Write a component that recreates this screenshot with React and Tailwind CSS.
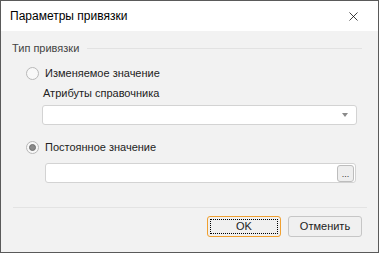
import { X } from 'lucide-react'

function Radio({ checked }) {
  return (
    <span className="w-[13px] h-[13px] rounded-full border border-[#b8b8b8] bg-[#f8f8f8] flex items-center justify-center shrink-0">
      {checked && <span className="w-[7px] h-[7px] rounded-full bg-[#8a8a8a] border border-[#707070]" />}
    </span>
  )
}

export default function App() {
  return (
    <div className="w-[379px] h-[253px] border border-[#5a5a5a] bg-[#f2f2f2] flex flex-col font-['Liberation_Sans',sans-serif] text-[11px] text-[#222] overflow-hidden">
      {/* title bar */}
      <div className="h-[30px] bg-white flex items-center pl-[9px] pr-[17px] shrink-0">
        <span className="text-[12px] text-black">Параметры привязки</span>
        <X size={15} strokeWidth={1.2} className="ml-auto text-black" />
      </div>

      {/* body */}
      <div className="flex-1 px-[11px] pt-[9px] flex flex-col">
        <div className="flex items-center gap-2 h-[16px]">
          <span className="text-[#444]">Тип привязки</span>
          <span className="flex-1 h-px bg-[#e2e2e2] mr-[5px]" />
        </div>

        <div className="flex items-center gap-[6px] mt-[9px] pl-[14px] h-[16px]">
          <Radio />
          <span>Изменяемое значение</span>
        </div>

        <div className="pl-[31px] mt-[4px] h-[16px] flex items-center">Атрибуты справочника</div>

        <div className="ml-[30px] mr-[10px] mt-[4px] h-[20px] bg-white border border-[#d3d3d3] rounded-[3px] flex items-center justify-end pr-[8px]">
          <span className="w-0 h-0 border-l-[3.5px] border-r-[3.5px] border-t-[4px] border-l-transparent border-r-transparent border-t-[#8a8a8a]" />
        </div>

        <div className="flex items-center gap-[6px] mt-[14px] pl-[14px] h-[16px]">
          <Radio checked />
          <span>Постоянное значение</span>
        </div>

        <div className="ml-[33px] mr-[11px] mt-[8px] h-[20px] bg-white border border-[#d3d3d3] rounded-[3px] flex items-center justify-end pr-px">
          <span className="w-[17px] h-[17px] bg-[#eeeeee] border border-[#bdbdbd] rounded-[3px] flex items-end justify-center pb-[2px] text-[9px] leading-none text-[#333]">...</span>
        </div>

        <div className="h-px bg-[#e3e3e3] mt-[24px] ml-px" />

        <div className="flex justify-end gap-[7px] mt-[8px] pr-[5px]">
          <button className="w-[74px] h-[21px] bg-[#f0f0f0] border border-[#f0a030] rounded-[3px] p-[2px]">
            <span className="w-full h-full border border-dotted border-black flex items-center justify-center text-[#222]">OK</span>
          </button>
          <button className="w-[74px] h-[21px] bg-[#f0f0f0] border border-[#c6c6c6] rounded-[3px] flex items-center justify-center text-[#222]">
            Отменить
          </button>
        </div>
      </div>
    </div>
  )
}
